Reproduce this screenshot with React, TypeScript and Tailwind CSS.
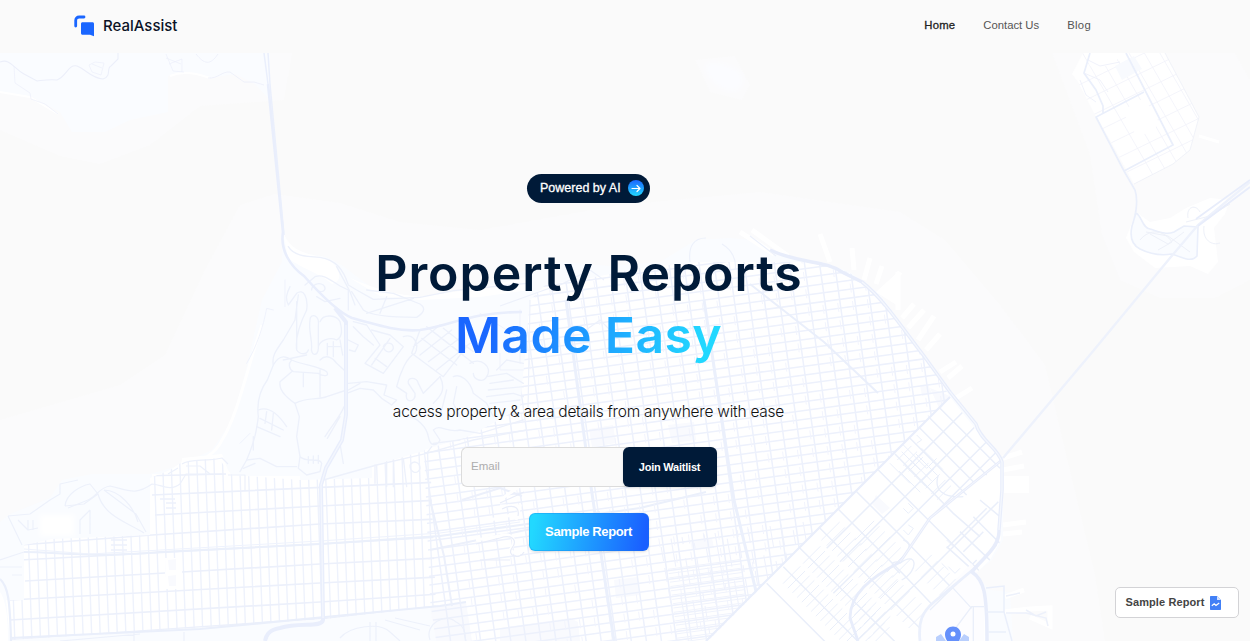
import React from "react";

type Pt = [number, number];

/** Parallel lines through `from`, stepping by `step`, each running along `dir` both ways. */
function lines(from: Pt, step: Pt, count: number, dir: Pt, back: number, ahead: number) {
  let d = "";
  for (let i = 0; i < count; i++) {
    const x = from[0] + step[0] * i;
    const y = from[1] + step[1] * i;
    d += `M${(x - dir[0] * back).toFixed(1)} ${(y - dir[1] * back).toFixed(1)}L${(x + dir[0] * ahead).toFixed(1)} ${(y + dir[1] * ahead).toFixed(1)}`;
  }
  return d;
}

/** Short alley segments scattered over a rotated lattice. */
function alleys(from: Pt, u: Pt, v: Pt, nu: number, nv: number, len: number) {
  let d = "";
  for (let i = 0; i < nu; i++) {
    for (let j = 0; j < nv; j++) {
      if ((i * 7 + j * 5 + ((i * j) % 4)) % 3 === 0) continue;
      const x = from[0] + u[0] * i + v[0] * j;
      const y = from[1] + u[1] * i + v[1] * j;
      d += `M${x.toFixed(1)} ${y.toFixed(1)}l${(v[0] * len).toFixed(1)} ${(v[1] * len).toFixed(1)}`;
    }
  }
  return d;
}

const MAINLAND =
  "M0 522L10 514L50 498L62 480L92 474L150 474L178 466L212 450L232 420L246 370L262 300L282 262L283 232C290 250 304 254 322 256C345 262 362 285 382 292L420 297L470 290L520 272L560 262L610 266L660 262L696 240L730 238L752 240L786 256L822 262L850 272L880 294L924 354L966 410L984 440L1003 460L1003 540L992 560L975 574L990 590L1010 592L1013 641L0 641Z";

const RICHMOND =
  "M24 545L52 539L150 535L150 478L170 470L182 462L218 458L232 475L300 480L372 478L372 466L420 452L430 452L436 606L326 619L10 640L6 600L24 600Z";
const CITY =
  "M424 450L470 436L520 408L530 300L545 285L590 278L640 268L700 262L770 262L822 262L850 273L880 296L924 354L950 397L708 641L436 641L430 600Z";
const SOMA = "M950 397L984 440L1002 460L1001 540L990 560L975 574L985 590L988 641L706 641Z";
const ISLAND =
  "M1083 53L1165 53L1199 117L1190 150L1173 164L1134 184L1110 140L1096 117L1078 82L1072 74Z";

function Presidio() {
  return (
    <g transform="translate(240 230) scale(.33333)" stroke="#edf1fb" strokeWidth="4" strokeLinejoin="round" strokeLinecap="round">
      <path d="M145 50C160 75 190 80 240 82C290 90 310 120 325 165L350 180L400 208L540 202L640 182L860 160" />
      <path d="M195 165L225 140C250 130 270 150 300 168L325 180V240M215 180C215 165 235 155 250 165C262 178 250 190 232 182M230 200L255 215L300 205M290 110L330 185L345 225M335 185L370 240C400 262 500 262 530 262C550 250 560 235 540 222L460 190L380 180M440 200L420 250M380 250L520 205" />
      <path d="M150 170C140 190 135 205 145 225L170 190C190 175 205 200 200 240M170 215V360M175 195L165 270L130 330C105 365 95 380 100 405L82 450C60 480 50 520 55 560C50 600 45 630 20 690L0 725M200 240C180 280 165 320 170 360C180 375 200 375 205 360" />
      <path d="M210 270C205 300 215 320 215 350C210 380 235 380 235 355V290C240 250 210 250 210 270M240 275C250 250 290 255 300 275C310 310 300 325 290 330C270 320 240 330 235 350M262 340V375M280 335V380M300 330L308 375M262 350H300" />
      <path d="M100 405C120 370 140 380 155 390C190 405 240 410 260 425C270 440 250 440 235 430L160 425C145 415 145 400 155 390M240 390C260 370 280 385 290 400L312 420M155 425L120 455C115 485 150 510 165 520C200 500 240 510 260 500L320 480M190 430V470M240 420V500M130 390L200 375" />
      <path d="M165 520L178 560L170 620L180 680C200 700 240 680 245 700L240 725L200 735L175 715L180 680M205 680V700M220 678V700M235 676V700M312 530C300 560 280 580 255 620M262 625L300 560" />
      <path d="M55 540C80 530 110 545 140 590M60 565L130 600M50 590L120 620M80 545L75 580M100 550L95 600M40 620V660M20 690L60 685L110 710H170M45 700L10 715" />
      <path d="M325 460L380 455L440 465L432 495L470 510L455 525L425 505L400 480L360 475L320 490M325 480L360 460" />
      <path d="M325 330L355 345L345 365L328 360M340 290L370 320L400 345M340 275L380 285L420 345L375 400L430 430L490 350L450 315L395 300M395 405L450 325M405 385L440 410M430 350C435 335 460 335 460 355C455 370 435 370 430 350" />
      <path d="M490 320C520 310 540 340 525 370C500 380 480 430 470 470L500 490C490 520 530 520 525 490L505 460C500 440 530 440 535 460L550 490L600 440M540 300L515 370L610 440L680 350M560 290L700 400M520 350L600 285M540 375L635 300M565 395L665 320M590 420L690 340M545 325L650 405M580 305L670 375M610 295L700 365" />
      <path d="M690 400C720 380 760 410 740 440C730 460 700 450 700 430M640 440C660 430 690 450 700 490L740 520L760 560M740 440L800 430L850 460M750 460L820 450M745 480L850 470M740 500L820 490L850 500M750 520L840 510M770 420L800 390L850 400M650 470L640 520L660 560M600 440C620 480 600 500 580 520" />
      <path d="M500 560C530 560 560 590 565 620C570 650 590 650 600 630L580 600C600 580 620 610 660 600L720 610L850 570M575 650L560 670M580 640L660 630M620 480L600 560" />
      <path d="M250 750L410 705L560 670L700 630L860 600M300 640L310 700" />
      <path d="M510 705C520 690 540 695 540 715C535 735 510 730 510 705M440 695V770M460 690V770M490 685L500 770M405 705V760" />
      <path d="M135 150V230M100 240L80 235C70 290 50 350 20 400M720 250L800 300L850 330M780 370V420H850M840 240V400M0 640L30 610" strokeWidth="2.500" />
    </g>
  );
}

function SouthOfMarket() {
  return (
    <g transform="translate(820 380) scale(.33333)" stroke="#eaeffa" strokeWidth="4.500">
      <path d="M428 97L20 505M465 140L60 545M500 185L240 445L40 640M530 215L330 415M360 85L540 265M330 115L500 285M300 145L460 305M270 175L440 345M225 222L400 400L480 470M175 270L350 445L500 595M110 335L240 465L460 690M55 388L250 583L400 740M0 445L300 745M-60 505L240 800M-110 560L130 800M-160 610L30 800" />
      <path d="M535 365L340 560L110 783M530 495L300 725M500 385L380 505M460 410L560 510M420 455L520 550M380 500L480 590M480 360L540 410M470 540L420 590M440 570L380 630M490 455L430 515" />
      <path d="M355 285C340 330 370 355 430 350M240 550C290 510 300 570 245 600M240 545C200 545 220 560 240 580M250 480C290 490 250 530 235 550" strokeWidth="4" />
      <path d="M250 195L320 265L350 235M245 215L300 270M210 250L270 310M290 165L305 180L290 190M265 370L280 385L265 400L250 385M250 450L265 465L280 445L265 435M385 560L405 580L420 565M365 550L385 570M380 480L400 500L430 470" strokeWidth="3" />
      <g strokeWidth="3">
        <path d={lines([305, 205], [-17, 17], 5, [0.707, 0.707], 0, 90)} />
        <path d={lines([232, 240], [17, 17], 8, [0.707, -0.707], 0, 60)} />
        <path d={lines([120, 465], [16, 16], 8, [0.707, -0.707], 22, 60)} />
        <path d={lines([15, 470], [16, 16], 12, [0.707, -0.707], 15, 62)} />
        <path d={lines([-40, 540], [14, 14], 16, [0.707, -0.707], 15, 58)} />
        <path d={lines([-100, 600], [14, 14], 16, [0.707, -0.707], 15, 58)} />
        <path d={lines([190, 640], [18, 18], 6, [0.707, -0.707], 20, 60)} />
        <path d={lines([300, 560], [18, 18], 5, [0.707, -0.707], 20, 50)} />
        <path d={lines([110, 700], [14, 14], 6, [0.707, -0.707], 30, 40)} />
      </g>
      <path d="M310 700L455 550L492 610V783H300L298 730Z" fill="#fdfdff" stroke="none" />
      <path d="M380 780L455 680H492M460 680V783M330 690L370 650L455 570M400 625L455 685" strokeWidth="4" />
    </g>
  );
}

function MapBackground() {
  return (
    <svg
      className="pointer-events-none absolute left-0 top-[53px] h-[588px] w-[1250px]"
      viewBox="0 53 1250 588"
      fill="none"
      aria-hidden="true"
    >
      <defs>
        <clipPath id="richmond"><path d={RICHMOND} /></clipPath>
        <clipPath id="city"><path d={CITY} /></clipPath>
        <clipPath id="soma"><path d={SOMA} /></clipPath>
        <clipPath id="island"><path d={ISLAND} /></clipPath>
        <filter id="soft" x="-20%" y="-20%" width="140%" height="140%"><feGaussianBlur stdDeviation="2.500" /></filter>
      </defs>

      {/* shallow water */}
      <g fill="#fbfbfc">
        <path d="M0 53H292L284 100L200 106L150 145L100 164L60 156L0 130Z" />
        <path d="M0 420L120 385L165 355L205 270L240 205L275 194L340 203L400 222L480 230L620 205L760 192L900 212L945 240L1000 305L1045 365L1065 450L1095 575L1105 641H0Z" />
        <path d="M1052 53H1235L1250 80V280L1215 298L1160 298L1120 280L1102 235L1090 155Z" />
        <path d="M695 60L735 56L750 85L742 100L710 92Z" />
      </g>
      <path d="M706 64C714 60 738 66 742 76C745 88 736 94 726 90C716 86 702 74 706 64Z" fill="#fbfcff" filter="url(#soft)" />

      {/* northern headland */}
      <path d="M0 53H270V100L255 84L235 74L210 78L190 72L168 76L168 112L130 120L105 132L72 132L60 112L30 96L0 92Z" fill="#fafcff" />
      <path d="M0 92L30 97L58 114M170 76C184 70 198 74 210 78" stroke="#fff" strokeWidth="2" />
      <g stroke="#eceffa" strokeWidth="1.1">
        <path d="M0 62C10 58 13 68 24 74L37 81C45 80 50 79 57 80C67 76 68 64 77 66C87 70 91 78 103 79C112 76 106 68 111 66L118 59V53" />
        <path d="M14 66L15 83L30 93L31 99L45 104L58 114" strokeWidth=".7" />
        <path d="M89 65L92 72L101 75L104 63L95 62L89 65M92 64L102 68M166 54L173 71L184 72M169 64L182 59V72M166 58L181 64" strokeWidth=".7" />
        <path d="M196 54C204 64 210 66 218 54M208 78C218 79 222 71 230 72L244 82L254 82L264 85" strokeWidth=".8" />
      </g>

      {/* peninsula */}
      <path d={MAINLAND} fill="#fafcff" />
      <path d="M283 232C290 250 304 254 324 257C338 264 346 280 332 284C318 272 300 268 288 258Z" fill="#fff" />
      <path d="M350 278C370 286 385 293 420 297L480 288L530 276L528 290L480 297L420 300L380 296Z" fill="#fff" />
      <path d="M262 325C248 365 238 415 222 440C215 456 195 464 180 468" stroke="#fff" strokeWidth="3" />
      <path d="M0 592C6 600 8 620 8 641H0Z" fill="#fff" />
      <path d="M40 515H74V536H40Z" fill="#fff" filter="url(#soft)" />
      <path d={RICHMOND} fill="#fff" />
      <path d={CITY} fill="#fff" />
      <path d={SOMA} fill="#fff" />
      <path d="M152 474H180L182 458L222 454L230 476H300V490H152Z" fill="#fff" />

      {/* piers */}
      <g stroke="#fff" strokeWidth="5">
        <path d="M740 232L774 254M752 230L788 256M820 234L830 262M852 248L854 270M870 258L864 280M882 266L876 284M900 272L884 296M898 272V310M914 304L902 318M924 310L908 328M934 316L918 340M940 334L926 350M956 362L940 372M962 366L948 378M972 388L956 398M1003 458L1022 452M1003 470L1024 466M1003 525L1026 522M1003 534L1022 532M1005 597L1024 590" />
        <path d="M1004 612L1030 609L1050 608V626L1030 617" />
      </g>
      <path d="M899 271L898 306L876 292ZM1004 476H1029V493H1004Z" fill="#fff" />

      {/* parks and squares */}
      <g fill="#f9fafe">
        <path d="M589 429L613 425L616 443L592 447ZM668 425L694 422L696 440L672 443ZM614 580L638 577L640 595L616 598ZM690 541L712 538L714 548L692 550ZM168 560L176 559V570H169ZM168 576L176 575V586H169ZM920 385L928 384L932 394L922 396ZM930 388L950 396L940 410ZM876 495L890 508L882 514L872 504Z" />
        <path d="M430 606L466 602L472 641H436Z" />
        <path d="M500 628L570 618L578 622L580 641H500Z" />
      </g>

      {/* Richmond grid */}
      <g clipPath="url(#richmond)">
        <path d={lines([12, 560], [8.55, -0.2], 52, [0.035, 1], 170, 100)} stroke="#eef2fc" strokeWidth="1.4" />
        <path
          d="M140 476L226 474M152 495L440 482M155 515L320 506L440 500M20 545L152 535L320 524L440 519M20 560L320 544L440 537M25 581L165 573M182 572L320 564L440 558M10 600L320 583L440 577M10 620L320 602L440 594M10 640L330 618L440 606"
          stroke="#ecf0fb"
          strokeWidth="1.7"
        />
        <path d="M165 558H181V589H166Z" fill="#fff" />
        <path d="M168 560L176 559V570H169ZM168 576L176 575V586H169Z" fill="#f9fafe" />
        <path d="M160 499H175M166 503H176M166 508H176M111 540H127M111 545H127M111 550H127" stroke="#edf1fb" strokeWidth="1.3" />
      </g>
      <path d="M24 552C60 552 90 558 160 552L320 544L440 536L520 525L640 508L706 492" stroke="#ebf0fb" strokeWidth="2" />
      <path d="M24 549L90 554L320 541L440 533L520 522" stroke="#eff3fd" strokeWidth="1" />
      <path d="M10 638L200 629L325 617L440 606L466 602M0 579C8 586 10 600 11 641" stroke="#eaeffb" strokeWidth="2.2" />

      {/* central grid */}
      <g clipPath="url(#city)">
        <path d={lines([400, 280], [14.8, -1.9], 46, [0.14, 1], 60, 430)} stroke="#edf1fc" strokeWidth="1.5" />
        <path d={lines([600, 190], [1.18, 8.7], 62, [1, -0.135], 420, 420)} stroke="#edf1fc" strokeWidth="1.5" />
        <path d={alleys([424, 300], [14.8, -1.9], [2.36, 17.4], 38, 26, 0.52)} stroke="#f2f4fd" strokeWidth="1" transform="translate(7 2)" />
        <path d={alleys([660, 540], [11, -1.4], [1.2, 7], 14, 15, 1)} stroke="#eff2fc" strokeWidth="1.1" />
        <path d={lines([700, 565], [0.6, 4.3], 18, [1, -0.135], 32, 40)} stroke="#f0f3fc" strokeWidth="1" />
        <path d="M566 300L590 480L614 641M704 300L734 500L768 641" stroke="#ebf0fc" strokeWidth="3" />
        <path d="M750 284L824 342L878 393" stroke="#eaeffb" strokeWidth="2" />
        <path d="M430 550L540 527L600 512M430 500L444 556L452 606M462 500L500 488L522 496" stroke="#ecf0fb" strokeWidth="2" />
        <path d="M500 500L520 486M500 506H520L516 520M476 540L500 536C512 532 518 540 510 550L520 556M490 520L516 514" stroke="#fff" strokeWidth="3" />
        <path d="M500 503L524 492M502 509C512 504 520 506 518 516M476 544L500 538C512 534 518 540 512 548C506 556 520 560 524 552M480 560H510" stroke="#e9edf9" strokeWidth="1.2" />
      </g>

      {/* South of Market grid */}
      <g clipPath="url(#soma)">
        <SouthOfMarket />
      </g>
      <path d="M950 397L706 641" stroke="#e9eefb" strokeWidth="2.2" />
      <path
        d="M1002 460L962 492L930 518L900 562C870 578 850 594 850 618L858 641"
        stroke="#e8edfb"
        strokeWidth="2.800"
        strokeLinejoin="round"
      />
      <path d="M1002 460L962 492L930 518L900 562" stroke="#f5f7fe" strokeWidth="1" />
      <path d="M920 641C918 622 922 612 934 602L975 568" stroke="#ebf0fc" strokeWidth="2.800" />

      {/* waterfront */}
      <path
        d="M770 250C800 264 825 260 842 272L862 282C885 300 905 332 924 356L950 392L976 424C980 440 998 448 1002 462V490L999 530C1000 548 980 560 972 572C984 580 987 592 987 641"
        stroke="#e8edfb"
        strokeWidth="3.500"
      />
      <path d="M862 282C885 300 905 332 924 356L950 392L976 424C980 440 998 448 1002 462V490L999 530" stroke="#f5f8fe" strokeWidth="1.2" />
      <path d="M986 588L1004 586V612L1012 641M986 612H1004M988 632H1006" stroke="#eaeffb" strokeWidth="1.5" />
      <path d="M1006 613H1026L1046 618L1048 626M1026 610L1036 616L1046 612M1006 596L1020 593" stroke="#edf1fb" strokeWidth="1.5" />

      {/* Marina and Fort Mason */}
      <g stroke="#edf1fb" strokeWidth="1.2">
        <path d="M690 262C688 246 694 238 706 238M722 244C732 250 737 260 735 270M750 236L776 256" />
        <path d="M500 306L550 288M560 285L590 270L604 280M586 330L600 320L620 340M530 300L528 410" />
      </g>

      {/* Presidio, Golden Gate approach and Park Presidio */}
      <Presidio />
      <path d="M268 84L283 232C280 250 290 266 304 276C320 294 338 312 352 318C380 326 400 332 420 330C450 326 470 312 522 312" stroke="#e9eefc" strokeWidth="2.600" />
      <path d="M264 53L268 84M268 53L270 84L284 235" stroke="#eaeffc" strokeWidth="1.500" />
      <path d="M335 308L346 322V415L342 440L326 468L321 485L323 620C322 628 300 622 280 628C268 630 266 636 265 641" stroke="#e9eefc" strokeWidth="4" strokeLinejoin="round" />
      <path d="M346 325V415L342 440L326 468L321 485L323 618" stroke="#f4f7fe" strokeWidth="1.2" />

      {/* Lands End and park edges */}
      <g stroke="#edf1fb" strokeWidth="1.2" strokeLinejoin="round">
        <path d="M222 474H186L180 484C170 492 160 484 152 484C135 496 128 490 110 486C98 488 98 496 88 500L68 508" />
        <path d="M8 516L30 514L50 500L60 494L60 484L78 480M8 516L22 545M65 506C66 494 80 486 90 484L98 494L84 504L65 506M98 494C104 516 126 522 144 533M104 490L136 514L146 532M104 490C120 490 134 508 138 522M90 510L80 520V534M90 510V534M28 520V530M33 520V530M18 520L28 530L38 528M0 560L24 552M0 567H22M12 575H22" />
        <path d="M182 464C190 458 206 462 222 458L228 464M186 466L200 466L210 474M168 474L178 468M228 475H245V490" />
        <path d="M340 638C350 626 380 622 390 632L400 641M430 640C424 624 446 612 456 622C468 628 464 638 466 641M60 641L140 634M184 632V641M134 633V641M370 622V641M376 622V641M385 620L420 630M395 618L430 626" />
      </g>

      {/* Treasure Island */}
      <path d={ISLAND} fill="#fff" />
      <g clipPath="url(#island)">
        <path d={lines([1090, 66], [12, -6], 10, [0.5, 0.866], 30, 150)} stroke="#f1f3fa" strokeWidth=".8" />
        <path d={lines([1130, 60], [8, 14.5], 10, [0.9, -0.44], 80, 80)} stroke="#f1f3fa" strokeWidth=".8" />
        <path d="M1122 111L1144 98L1160 124L1138 138ZM1084 53L1122 53L1112 66L1090 66Z" fill="#fff" />
        <path d="M1115 66L1134 56L1142 69L1122 80Z" fill="#f8fafe" />
      </g>
      <path d="M1090 53L1084 73L1096 90L1103 106L1103 113M1126 53L1173 145L1124 171M1144 92L1096 117L1124 171L1135 190C1140 205 1132 225 1131 238C1131 252 1150 258 1172 254" stroke="#eaeffb" strokeWidth="1.7" />
      <path d="M1088 60L1100 66L1120 62M1084 73L1100 80L1108 92M1080 80L1086 95L1096 102" stroke="#eef1fa" strokeWidth=".9" />
      <path d="M1165 53L1199 117L1190 150L1173 164L1134 184" stroke="#eef0f7" strokeWidth=".8" />
      <path d="M1199 136L1219 142" stroke="#fff" strokeWidth="3" />
      <path d="M1136 212L1150 222L1170 218L1186 208L1210 198L1230 200L1225 214L1214 228L1218 262L1208 274L1190 266L1155 268L1134 252L1126 238Z" fill="#fff" />
      <path d="M1136 213C1142 216 1142 228 1150 229C1160 232 1166 235 1174 232L1184 226L1198 227L1197 256C1192 262 1185 259 1172 254C1160 256 1150 254 1140 249C1130 244 1130 235 1132 226Z" fill="#fafcff" stroke="#eaeffb" strokeWidth="1.6" />
      <path d="M1146 232L1168 236L1190 252M1140 240C1150 228 1164 230 1172 242L1158 250M1150 234L1168 244L1184 232M1188 218C1186 206 1196 204 1200 212M1186 222L1210 216L1230 204M1204 226C1202 240 1212 246 1220 243" stroke="#eef1f9" />
      <path d="M1250 182L1198 225L1170 258L1094 350L1003 458" stroke="#eef2fc" strokeWidth="2.4" />
      <path d="M1250 180L1196 219M1250 187L1198 226" stroke="#e8edfb" strokeWidth="1.800" />

      {/* location pin */}
      <path d="M936 637L941 634L946 641H936ZM969 637L964 634L959 641H969Z" fill="#b9cffd" />
      <path d="M953 626.5C948.500 626.500 945 630 945 634.500C945 638 947 641 950 646H956C959 641 961 638 961 634.500C961 630 957.500 626.500 953 626.500Z" fill="#6590fb" />
      <circle cx="953" cy="634" r="2.5" fill="#fff" />
    </svg>
  );
}

function LogoMark() {
  return (
    <svg className="h-[22px] w-[21px]" viewBox="0 0 21 22" aria-hidden="true">
      <path d="M1.700 11V5.500C1.700 3.200 3 2 5.200 2H10" fill="none" stroke="#1a66ff" strokeWidth="2.800" strokeLinecap="round" />
      <path d="M8.500 7.200H18.500C19.400 7.200 20 7.800 20 8.700V21.200L16 19.800H8.500C7.600 19.800 7 19.200 7 18.300V8.700C7 7.800 7.600 7.200 8.500 7.200Z" fill="#1a66ff" />
    </svg>
  );
}

function Header() {
  return (
    <header className="flex h-[53px] items-start justify-between bg-[#fafafa] pl-[74px] pr-[159px]">
      <a className="mt-[15px] flex items-center gap-2">
        <LogoMark />
        <span className="font-['Inter',sans-serif] text-[15px] font-medium leading-[22px] text-[#0b1226]">RealAssist</span>
      </a>
      <nav className="mt-[17px] flex gap-7 text-[11.3px] leading-4 text-[#555]">
        <a className="tracking-[0.2px] text-[#222] [-webkit-text-stroke:0.3px_#222]">Home</a>
        <a>Contact Us</a>
        <a className="tracking-[0.3px]">Blog</a>
      </nav>
    </header>
  );
}

export default function App() {
  return (
    <div className="relative h-[641px] w-[1250px] overflow-hidden bg-[#fafafa] font-['Liberation_Sans',Arial,sans-serif]">
      <MapBackground />
      <div className="relative">
        <Header />
        <main className="flex w-[1177px] flex-col items-center pt-[121px]">
          <div className="flex h-[29px] w-[123px] items-center justify-between rounded-full bg-[#001a38] pl-[13px] pr-[6px]">
            <span className="whitespace-nowrap text-[12.5px] leading-none text-white [-webkit-text-stroke:0.3px_#fff]">Powered by AI</span>
            <span className="mb-px flex size-4 items-center justify-center rounded-full bg-[linear-gradient(180deg,#1a66ff,#22d8ff)]">
              <svg className="size-[10px]" viewBox="0 0 10 10" fill="none" stroke="#fff" strokeWidth="1.200" strokeLinecap="round" strokeLinejoin="round">
                <path d="M1 5.500H9M6 2.500L9 5.500L6 8.500" />
              </svg>
            </span>
          </div>
          <h1 className="mt-[39px] flex flex-col items-center whitespace-nowrap font-['Inter',sans-serif] text-[50px] font-[560] leading-[62px] text-[#001a38]">
            <span className="-mr-px tracking-[0.95px]">Property Reports</span>
            <span className="bg-[linear-gradient(100deg,#1a66ff_12%,#22d8ff_92%)] bg-clip-text tracking-[0.35px] text-transparent">Made Easy</span>
          </h1>
          <p className="mt-[34px] whitespace-nowrap font-['Inter',sans-serif] text-[15.5px] font-light leading-6 tracking-[-0.24px] text-[#111]">
            access property &amp; area details from anywhere with ease
          </p>
          <form className="mt-[23px] flex h-10 w-64">
            <input
              placeholder="Email"
              className="min-w-0 flex-1 rounded-l-md border border-r-0 border-[#dcdcdc] bg-[#fafafa] px-[9.5px] text-[11.5px] outline-none placeholder:text-[#adadad]"
            />
            <button type="button" className="-ml-1 w-[94px] whitespace-nowrap rounded-md bg-[#001a38] text-[11px] font-bold tracking-[-0.22px] text-white shadow-sm">
              Join Waitlist
            </button>
          </form>
          <button
            type="button"
            className="mt-[26px] h-[38px] w-[120px] whitespace-nowrap rounded-md border border-[#1b7be8]/30 bg-[linear-gradient(100deg,#22d8ff_5%,#1a5fff_95%)] bg-origin-border text-[13px] font-bold tracking-[-0.38px] text-white shadow-sm"
          >
            Sample Report
          </button>
        </main>
      </div>
      <button
        type="button"
        className="absolute left-[1115px] top-[587px] flex h-[31px] w-[124px] items-center gap-[6px] whitespace-nowrap rounded-[5px] border border-[#d3d3d6] bg-white pl-[9.5px] text-[11px] font-bold tracking-[0.1px] text-[#444]"
      >
        Sample Report
        <svg className="h-[14px] w-[11px]" viewBox="0 0 11 14" aria-hidden="true">
          <path d="M1 0H7L11 4V13C11 13.600 10.600 14 10 14H1C.4 14 0 13.600 0 13V1C0 .4.4 0 1 0Z" fill="#4280f6" />
          <path d="M7 0V4H11Z" fill="#d5e3ff" />
          <path d="M1.800 9.800L4.200 7.800L6 9.500L9.200 7" fill="none" stroke="#fff" strokeWidth="1.200" />
        </svg>
      </button>
    </div>
  );
}
